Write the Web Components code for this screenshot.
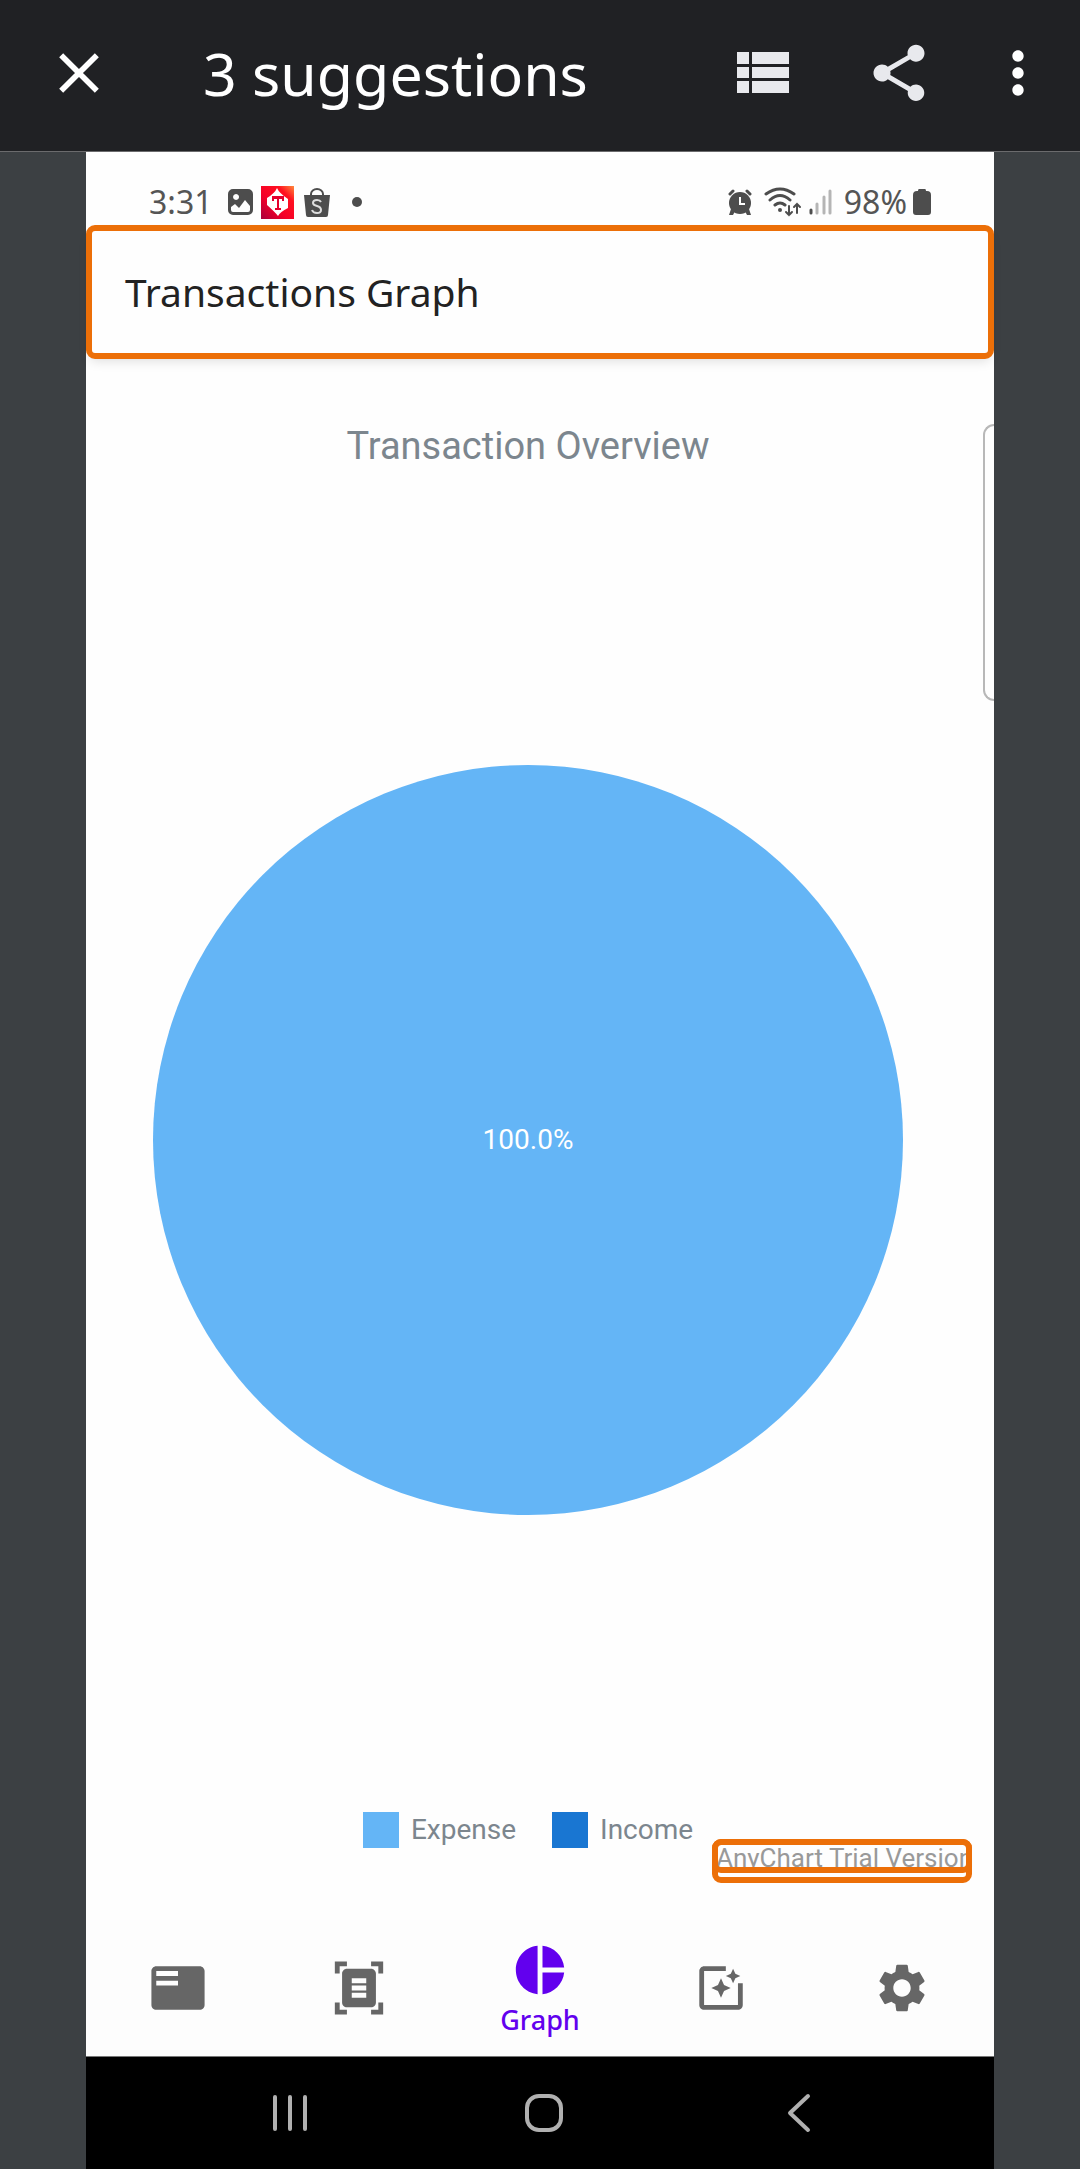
<!DOCTYPE html>
<html lang="en">
<head>
<meta charset="utf-8">
<meta name="viewport" content="width=device-width, initial-scale=1">
<title>3 suggestions</title>
<style>
  html, body { margin: 0; }
  body { background: #3c4043; font-family: "Noto Sans", "Open Sans", sans-serif; }
</style>
</head>
<body>
<scan-report></scan-report>
<script>
const define = (name, html) => {
  const template = document.createElement('template');
  template.innerHTML = html;
  customElements.define(name, class extends HTMLElement {
    constructor() {
      super();
      this.attachShadow({ mode: 'open' }).append(template.content.cloneNode(true));
    }
  });
};

/* Top bar of the report viewer */
define('report-bar', `
<style>
  :host { display: block; background: #202124; color: #fff; }
  header { display: flex; align-items: center; height: 152px; box-sizing: border-box; border-bottom: 1px solid #6b6b6d; padding: 0 28px 6px 45px; }
  h1 { flex: 1; margin: 0; padding-left: 90px; font-size: 59px; line-height: 72px; font-weight: 400; white-space: nowrap; }
  .tools { display: flex; gap: 51px; }
  .pair { display: flex; gap: 68px; }
  button { display: block; border: 0; padding: 0; background: none; color: #fff; }
  .pair button { color: #e8e9ed; }
  svg { display: block; width: 68px; height: 68px; fill: currentColor; }
</style>
<header>
  <button aria-label="Close"><svg viewBox="0 0 24 24"><path d="M19 6.41 17.59 5 12 10.59 6.41 5 5 6.41 10.59 12 5 17.59 6.41 19 12 13.41 17.59 19 19 17.59 13.41 12z"/></svg></button>
  <h1>3 suggestions</h1>
  <div class="tools">
    <div class="pair">
      <button aria-label="List"><svg viewBox="0 0 68 68"><path d="M8 13h12v12H8zm15 0h37v12H23zM8 28h12v11H8zm15 0h37v11H23zM8 42h12v12H8zm15 0h37v12H23z"/></svg></button>
      <button aria-label="Share"><svg viewBox="0 0 24 24"><path d="M18 16.08c-.76 0-1.44.3-1.96.77L8.91 12.7c.05-.23.09-.46.09-.7s-.04-.47-.09-.7l7.05-4.11c.54.5 1.25.81 2.04.81 1.66 0 3-1.34 3-3s-1.34-3-3-3-3 1.34-3 3c0 .24.04.47.09.7L8.04 9.81C7.5 9.31 6.79 9 6 9c-1.66 0-3 1.34-3 3s1.34 3 3 3c.79 0 1.5-.31 2.04-.81l7.12 4.16c-.05.21-.08.43-.08.65 0 1.61 1.31 2.92 2.92 2.92s2.92-1.31 2.92-2.92-1.31-2.92-2.92-2.92z"/></svg></button>
    </div>
    <button aria-label="More options"><svg viewBox="0 0 24 24"><path d="M12 8c1.1 0 2-.9 2-2s-.9-2-2-2-2 .9-2 2 .9 2 2 2zm0 2c-1.1 0-2 .9-2 2s.9 2 2 2 2-.9 2-2-.9-2-2-2zm0 6c-1.1 0-2 .9-2 2s.9 2 2 2 2-.9 2-2-.9-2-2-2z"/></svg></button>
  </div>
</header>`);

/* Android status bar */
define('phone-status', `
<style>
  :host { display: flex; align-items: center; justify-content: space-between; height: 73px; box-sizing: border-box; padding: 27px 63px 0 63px; color: #4d4d4d; font-size: 32px; line-height: 40px; }
  div { display: flex; align-items: center; }
  svg { display: block; height: 34px; }
  .left svg { margin-left: 10px; }
  span { color: #555; }
</style>
<div class="left">
  <span>3:31</span>
  <svg width="34" viewBox="0 0 34 34"><path fill="currentColor" fill-rule="evenodd" d="M10 4h15a5 5 0 0 1 5 5v16a5 5 0 0 1-5 5H10a5 5 0 0 1-5-5V9a5 5 0 0 1 5-5zM8 22v3q0 2 2 2h15q2 0 2-2v-4l-5-6-6 8-4-4zM13 9a3 3 0 1 0 .1 0z"/></svg>
  <svg style="margin-left:4px" width="33" viewBox="0 0 33 34">
    <defs><linearGradient id="g" x1="0" y1="1" x2="1" y2="0"><stop offset="0" stop-color="#a8003c"/><stop offset=".4" stop-color="#f50028"/><stop offset=".75" stop-color="#ff1020"/><stop offset="1" stop-color="#ff8a3c"/></linearGradient></defs>
    <path fill="url(#g)" d="M0 1h33v33H0z"/><path fill="#fff" d="M16 3Q18 8 27 14v9Q19 27 17 31Q14 27 6 20v-7Q14 8 16 3z"/><path fill="#e5002e" d="M11 11h12v5h-2v-2h-3v9h2v2h-6v-2h2v-9h-3v2h-2z"/></svg>
  <svg width="26" viewBox="0 0 26 34"><path fill="none" stroke="currentColor" stroke-width="2" d="M7 11V9a6 5 0 0 1 12 0v2"/><path fill="currentColor" d="M0 10h26l-2 20q0 2-2 2H4q-2 0-2-2z"/><path fill="none" stroke="#ddd" stroke-width="2" d="M17 17q-1-2-4-2-4 0-4 3 0 2 4 3t4 4q0 3-4 3-4 0-5-3"/></svg>
  <svg width="34" viewBox="0 0 34 34"><circle cx="17" cy="17" r="5" fill="currentColor"/></svg>
</div>
<div class="right">
  <svg width="24" viewBox="0 0 24 34"><g fill="currentColor"><circle cx="12" cy="18" r="11"/><path d="M3 24h5l-3 6H1zm18 0h-5l3 6h4z"/></g><path fill="none" stroke="currentColor" stroke-width="3" stroke-linecap="round" d="m2 9 3-3m17 3-3-3"/><path fill="none" stroke="#fff" stroke-width="2" d="M12 12v7h5"/></svg>
  <svg style="margin-left:12px" width="38" viewBox="0 0 38 34"><g fill="none" stroke="currentColor" stroke-width="3" stroke-linecap="round"><path d="M2 9q14-10 28 0M6 15q10-9 20 0M11 20q5-4 10 0"/><path stroke-width="2" d="M25 21v9m-3-3 3 3 3-3M33 28v-9m-3 3 3-3 3 3"/></g><circle cx="16" cy="25" r="2" fill="currentColor"/></svg>
  <svg style="margin-left:6px" width="26" viewBox="0 0 26 34"><g stroke="#b5b5b5" stroke-width="3" stroke-linecap="round"><path stroke="#4d4d4d" d="M3 25v3"/><path d="M9 19v9M16 12v16M22 6v22"/></g></svg>
  <span style="margin-left:10px">98%</span>
  <svg style="margin-left:6px" width="18" viewBox="0 0 18 34"><path fill="currentColor" d="M6 4h6q1 0 1 2h1q4 0 4 4v17q0 3-3 3H3q-3 0-3-3V10q0-4 4-4h1q0-2 1-2z"/></svg>
</div>`);

/* App title, outlined as a suggestion */
define('app-title', `
<style>
  :host { display: block; border: 6px solid #ec6f08; border-radius: 9px; background: #fefefe; box-shadow: 0 6px 12px -4px #0002; }
  h2 { margin: 0; padding: 33px; font-size: 39px; line-height: 56px; font-weight: 400; color: #222; white-space: nowrap; }
</style>
<h2><slot></slot></h2>`);

define('legend-item', `
<style>
  :host { display: flex; align-items: center; gap: 12px; }
  i { width: 36px; height: 36px; background: var(--swatch); }
</style>
<i></i><span><slot></slot></span>`);

define('pie-chart', `
<style>
  :host { flex: 1; display: flex; flex-direction: column; position: relative; padding: 65px 24px 72px 0; font-family: Roboto, sans-serif; color: #7c868e; }
  h3 { margin: 0; text-align: center; font-size: 38px; line-height: 44px; font-weight: 400; }
  .plot { flex: 1; display: flex; align-items: center; padding: 0 67px; }
  .pie { display: flex; align-items: center; justify-content: center; flex: 1; aspect-ratio: 1; border-radius: 50%; background: #64b5f6; color: #fff; font-size: 28px; line-height: 36px; }
  .legend { display: flex; justify-content: center; gap: 36px; font-size: 28px; line-height: 36px; }
  .trial { position: absolute; right: 22px; bottom: 37px; width: 260px; height: 44px; box-sizing: border-box; padding: 4px; color: #999; font-size: 26px; line-height: 30px; white-space: nowrap; }
  .trial::before, .trial::after { content: ""; position: absolute; inset: 0; border: 6px solid #ec6f08; border-radius: 9px; }
  .trial::after { bottom: 10px; }
  .handle { position: absolute; right: 0; top: 65px; width: 11px; height: 277px; box-sizing: border-box; border: 2px solid #b8b8b8; border-right: 0; border-radius: 11px 0 0 11px; }
</style>
<h3><slot></slot></h3>
<div class="plot"><div class="pie">100.0%</div></div>
<div class="legend">
  <legend-item style="--swatch:#64b5f6">Expense</legend-item>
  <legend-item style="--swatch:#1976d2">Income</legend-item>
</div>
<div class="trial">AnyChart Trial Version</div>
<div class="handle"></div>`);

define('tab-item', `
<style>
  :host { flex: 1; display: flex; color: #666; }
  :host([selected]) { color: #6200ee; }
  button { flex: 1; display: flex; flex-direction: column; align-items: center; justify-content: center; gap: 2px; border: 0; padding: 0; background: none; color: inherit; font: 500 27px/38px "Noto Sans", sans-serif; }
  :host([selected]) button { padding-top: 4px; }
  ::slotted(svg) { display: block; width: 58px; height: 58px; fill: currentColor; }
</style>
<button><slot name="icon"></slot><slot></slot></button>`);

define('tab-bar', `
<style>
  :host { display: block; background: #fdfdfd; }
  nav { display: flex; height: 136px; padding: 0 2px; }
</style>
<nav aria-label="Sections">
  <tab-item><svg slot="icon" role="img" aria-label="Transactions" viewBox="0 0 24 24"><path d="M21 3H3c-1.1 0-2 .9-2 2v14c0 1.1.9 2 2 2h18c1.1 0 2-.9 2-2V5c0-1.1-.9-2-2-2zm-9 8H3V9h9v2zm0-4H3V5h9v2z"/></svg></tab-item>
  <tab-item><svg slot="icon" role="img" aria-label="Scan" viewBox="0 0 24 24"><path d="M7 3H4v3H2V1h5v2zm15 3V1h-5v2h3v3h2zM7 21H4v-3H2v5h5v-2zm13-3v3h-3v2h5v-5h-2zm-1 0c0 1.1-.9 2-2 2H7c-1.1 0-2-.9-2-2V6c0-1.1.9-2 2-2h10c1.1 0 2 .9 2 2v12zM15 8H9v2h6V8zm0 3H9v2h6v-2zm0 3H9v2h6v-2z"/></svg></tab-item>
  <tab-item selected><svg slot="icon" aria-hidden="true" viewBox="0 0 24 24"><path d="M11 2v20c-5.07-.5-9-4.79-9-10s3.93-9.5 9-10zm2.03 0v8.99H22c-.47-4.74-4.24-8.52-8.97-8.99zm0 11.01V22c4.74-.47 8.5-4.25 8.97-8.99h-8.97z"/></svg>Graph</tab-item>
  <tab-item><svg slot="icon" role="img" aria-label="Insights" viewBox="0 0 24 24"><path d="M19.02 10v9H5V5h9V3H5.02c-1.1 0-2 .9-2 2v14c0 1.1.9 2 2 2H19c1.1 0 2-.9 2-2v-9h-1.98zM17 10l.94-2.06L20 7l-2.06-.94L17 4l-.94 2.06L14 7l2.06.94zm-3.75.75L12 8l-1.25 2.75L8 12l2.75 1.25L12 16l1.25-2.75L16 12z"/></svg></tab-item>
  <tab-item><svg slot="icon" role="img" aria-label="Settings" viewBox="0 0 24 24"><path d="M19.14 12.94c.04-.3.06-.61.06-.94 0-.32-.02-.64-.07-.94l2.03-1.58c.18-.14.23-.41.12-.61l-1.92-3.32c-.12-.22-.37-.29-.59-.22l-2.39.96c-.5-.38-1.03-.7-1.62-.94l-.36-2.54c-.04-.24-.24-.41-.48-.41h-3.84c-.24 0-.43.17-.47.41l-.36 2.54c-.59.24-1.13.57-1.62.94l-2.39-.96c-.22-.08-.47 0-.59.22L2.74 8.87c-.12.21-.08.47.12.61l2.03 1.58c-.05.3-.09.63-.09.94s.02.64.07.94l-2.03 1.58c-.18.14-.23.41-.12.61l1.92 3.32c.12.22.37.29.59.22l2.39-.96c.5.38 1.03.7 1.62.94l.36 2.54c.05.24.24.41.48.41h3.84c.24 0 .44-.17.47-.41l.36-2.54c.59-.24 1.13-.56 1.62-.94l2.39.96c.22.08.47 0 .59-.22l1.92-3.32c.12-.22.07-.47-.12-.61l-2.01-1.58zM12 15.6c-1.98 0-3.6-1.62-3.6-3.6s1.62-3.6 3.6-3.6 3.6 1.62 3.6 3.6-1.62 3.6-3.6 3.6z"/></svg></tab-item>
</nav>`);

define('system-keys', `
<style>
  :host { display: block; background: #000; border-top: 1px solid #777; }
  nav { display: flex; height: 112px; padding: 0 68px 0 77px; }
  button { flex: 1; display: flex; align-items: center; justify-content: center; border: 0; padding: 0; background: none; }
  svg { width: 40px; height: 40px; fill: none; stroke: #b0b0b0; stroke-width: 4; stroke-linecap: round; stroke-linejoin: round; }
</style>
<nav aria-label="System">
  <button aria-label="Recent apps"><svg viewBox="0 0 40 40"><path d="M5 4v32M20 4v32M35 4v32"/></svg></button>
  <button aria-label="Home"><svg viewBox="0 0 40 40"><rect x="3" y="3" width="34" height="34" rx="12"/></svg></button>
  <button aria-label="Back"><svg viewBox="0 0 40 40"><path d="M29 3 11 20l18 17"/></svg></button>
</nav>`);

define('scan-report', `
<style>
  :host { display: flex; flex-direction: column; min-height: 100vh; }
  main { flex: 1; display: flex; flex-direction: column; margin: 0 86px; background: #fefefe; }
</style>
<report-bar></report-bar>
<main>
  <phone-status></phone-status>
  <app-title>Transactions Graph</app-title>
  <pie-chart>Transaction Overview</pie-chart>
  <tab-bar></tab-bar>
  <system-keys></system-keys>
</main>`);
</script>
</body>
</html>
